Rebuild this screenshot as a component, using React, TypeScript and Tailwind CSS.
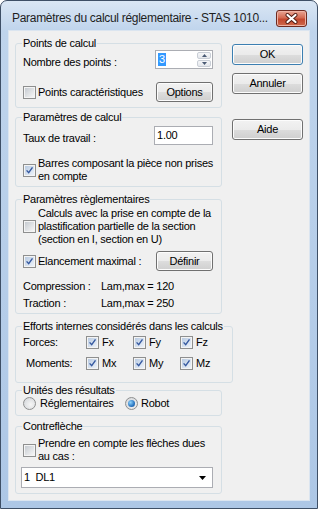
import React from "react";

const btn =
  "flex items-center justify-center rounded-[3px] border bg-[linear-gradient(#f2f2f2,#ebebeb_50%,#dddddd_51%,#cfcfcf)] shadow-[inset_0_0_0_1px_#fcfcfc] text-black";

function Check({ checked }: { checked?: boolean }) {
  return (
    <span className="flex h-[13px] w-[13px] shrink-0 items-center justify-center border border-[#8e8f8f] bg-[#f4f4f4]">
      <span
        className={`flex h-[9px] w-[9px] items-center justify-center ${
          checked
            ? "bg-[linear-gradient(135deg,#b9cbe2,#edf2f9)]"
            : "bg-[linear-gradient(135deg,#c6cbd1,#f6f6f6)]"
        }`}
      >
        {checked && (
          <svg width="9" height="9" viewBox="0 0 9 9">
            <path d="M1.6 4.4 L3.7 6.7 L7.5 1.4" fill="none" stroke="#3559a0" strokeWidth="1.4" />
          </svg>
        )}
      </span>
    </span>
  );
}

function Radio({ on }: { on?: boolean }) {
  return (
    <span className="flex h-[13px] w-[13px] shrink-0 items-center justify-center rounded-full border border-[#8e8f8f] bg-[radial-gradient(circle_at_60%_60%,#f6f6f6,#cfd2d6)]">
      {on && (
        <span className="h-[7px] w-[7px] rounded-full bg-[radial-gradient(circle_at_35%_35%,#8fd3fb,#2a76c2_60%,#174a86)]" />
      )}
    </span>
  );
}

function Group({
  title,
  className,
  children,
}: {
  title: string;
  className: string;
  children: React.ReactNode;
}) {
  return (
    <fieldset className={`rounded-[3px] border border-[#d5dfe5] pl-[7px] pr-[8px] ${className}`}>
      <legend className="-ml-[1px] whitespace-nowrap px-[1px] leading-[13px]">{title}</legend>
      {children}
    </fieldset>
  );
}

function CheckItem({ label, w }: { label: string; w: string }) {
  return (
    <span className={`flex items-center gap-[3px] ${w}`}>
      <Check checked />
      <span>{label}</span>
    </span>
  );
}

export default function App() {
  return (
    <div className="h-[509px] w-[318px] bg-white font-['Liberation_Sans',Arial,sans-serif] text-[11px] leading-[13px] tracking-[-0.25px] text-black">
      <div className="flex h-full w-full flex-col rounded-t-[7px] border border-[#3e4f66] bg-[linear-gradient(#dae6f4,#bfd4ec_30px,#adc7e6)] px-[7px] pb-[7px]">
        {/* title bar */}
        <div className="flex h-[29px] items-start justify-between pl-[4px] pr-[3px] pt-[9px]">
          <span className="whitespace-nowrap text-[12px] leading-[17px] tracking-[-0.3px] text-[#1e1e1e]">
            Paramètres du calcul réglementaire - STAS 1010...
          </span>
          <span className="flex h-[17px] w-[31px] shrink-0 items-center justify-center rounded-[3px] border border-[#6e2a20] bg-[linear-gradient(#e9a594,#d46a52_45%,#c2472e_55%,#cf6a4d)] shadow-[inset_0_0_0_1px_#eeb3a4]">
            <svg width="13" height="11" viewBox="0 0 13 11">
              <path d="M2.5 2 L10.5 9 M10.5 2 L2.5 9" stroke="#4d1a12" strokeWidth="4" strokeLinecap="round" />
              <path d="M2.5 2 L10.5 9 M10.5 2 L2.5 9" stroke="#fff" strokeWidth="2.2" strokeLinecap="round" />
            </svg>
          </span>
        </div>

        {/* client area */}
        <div className="flex flex-1 border border-[#dbe5f0] bg-[#f0f0f0] pl-[6px] pt-[6px]">
          <div className="flex w-[207px] flex-col">
            <Group title="Points de calcul" className="h-[71px]">
              <div className="flex h-[19px] items-center justify-between">
                <span className="pt-[6px]">Nombre des points :</span>
                <span className="flex h-[19px] w-[58px] border border-[#abadb3] bg-white">
                  <span className="flex flex-1 items-center pl-[2px]">
                    <span className="bg-[#3399ff] px-[1px] leading-[13px] text-white">3</span>
                  </span>
                  <span className="flex w-[16px] flex-col gap-px p-px">
                    <span className="flex flex-1 items-center justify-center rounded-[2px] border border-[#c9ced6] bg-[linear-gradient(#f6f7f9,#e4e7ec)]">
                      <svg width="5" height="3" viewBox="0 0 5 3">
                        <path d="M0 3 L2.5 0 L5 3Z" fill="#4a5a74" />
                      </svg>
                    </span>
                    <span className="flex flex-1 items-center justify-center rounded-[2px] border border-[#c9ced6] bg-[linear-gradient(#f6f7f9,#e4e7ec)]">
                      <svg width="5" height="3" viewBox="0 0 5 3">
                        <path d="M0 0 L2.5 3 L5 0Z" fill="#4a5a74" />
                      </svg>
                    </span>
                  </span>
                </span>
              </div>
              <div className="mt-[13px] flex h-[20px] items-center justify-between">
                <span className="flex items-center gap-[2px]">
                  <Check />
                  <span>Points caractéristiques</span>
                </span>
                <button className={`${btn} h-[20px] w-[57px] border-[#707070]`}>Options</button>
              </div>
            </Group>

            <Group title="Paramètres de calcul" className="mt-[3px] h-[76px]">
              <div className="mt-[2px] flex h-[19px] items-center justify-between">
                <span className="pt-[6px]">Taux de travail :</span>
                <span className="flex h-[19px] w-[59px] items-center border border-[#abadb3] bg-white pl-[2px]">
                  1.00
                </span>
              </div>
              <div className="mt-[12px] flex items-center gap-[2px]">
                <Check checked />
                <span className="whitespace-nowrap">
                  Barres composant la pièce non prises
                  <br />
                  en compte
                </span>
              </div>
            </Group>

            <Group title="Paramètres règlementaires" className="mt-[6px] h-[121px]">
              <div className="mt-[1px] flex items-center gap-[2px]">
                <Check />
                <span className="whitespace-nowrap">
                  Calculs avec la prise en compte de la
                  <br />
                  plastification partielle de la section
                  <br />
                  (section en I, section en U)
                </span>
              </div>
              <div className="mt-[5px] flex h-[20px] items-center justify-between">
                <span className="flex items-center gap-[2px]">
                  <Check checked />
                  <span>Elancement maximal :</span>
                </span>
                <button className={`${btn} h-[20px] w-[57px] border-[#707070]`}>Définir</button>
              </div>
              <div className="mt-[9px] flex">
                <span className="w-[78px]">Compression :</span>
                <span>Lam,max = 120</span>
              </div>
              <div className="mt-[4px] flex">
                <span className="w-[78px]">Traction :</span>
                <span>Lam,max = 250</span>
              </div>
            </Group>

            <Group title="Efforts internes considérés dans les calculs" className="mt-[6px] h-[63px]">
              <div className="mt-[3px] flex h-[13px] items-center">
                <span className="w-[63px]">Forces:</span>
                <CheckItem label="Fx" w="w-[47px]" />
                <CheckItem label="Fy" w="w-[47px]" />
                <CheckItem label="Fz" w="" />
              </div>
              <div className="mt-[8px] flex h-[13px] items-center">
                <span className="w-[63px] pl-[3px]">Moments:</span>
                <CheckItem label="Mx" w="w-[47px]" />
                <CheckItem label="My" w="w-[47px]" />
                <CheckItem label="Mz" w="" />
              </div>
            </Group>

            <Group title="Unités des résultats" className="mt-[1px] h-[32px]">
              <div className="flex h-[13px] items-center">
                <span className="flex w-[102px] items-center gap-[4px]">
                  <Radio />
                  <span>Réglementaires</span>
                </span>
                <span className="flex items-center gap-[3px]">
                  <Radio on />
                  <span>Robot</span>
                </span>
              </div>
            </Group>

            <Group title="Contreflèche" className="mt-[4px] h-[74px]">
              <div className="mt-[4px] flex items-center gap-[2px]">
                <Check />
                <span className="whitespace-nowrap">
                  Prendre en compte les flèches dues
                  <br />
                  au cas :
                </span>
              </div>
              <div className="-ml-[2px] mt-[4px] flex h-[21px] items-center justify-between border border-[#abadb3] bg-white pl-[2px] pr-[6px]">
                <span className="whitespace-pre">1  DL1</span>
                <svg width="7" height="4" viewBox="0 0 7 4">
                  <path d="M0 0 L7 0 L3.5 4Z" fill="#000" />
                </svg>
              </div>
            </Group>
          </div>

          <div className="ml-[10px] flex w-[71px] flex-col pt-[7px]">
            <button className={`${btn} h-[21px] w-[71px] border-[#3c7fb1] shadow-[inset_0_0_0_1px_#a8def5]`}>OK</button>
            <button className={`${btn} mt-[8px] h-[21px] w-[71px] border-[#707070]`}>Annuler</button>
            <button className={`${btn} mt-[25px] h-[21px] w-[71px] border-[#707070]`}>Aide</button>
          </div>
        </div>
      </div>
    </div>
  );
}
